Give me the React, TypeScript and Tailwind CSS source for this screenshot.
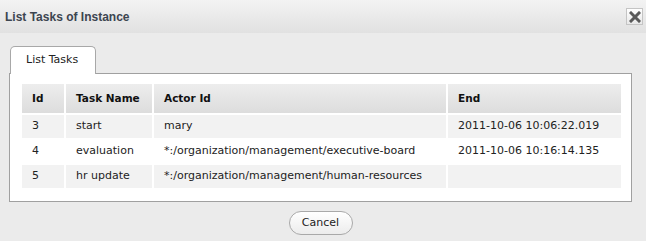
import React from 'react';

interface TaskRow {
  id: string;
  name: string;
  actor: string;
  end: string;
}

const rows: TaskRow[] = [
  { id: '3', name: 'start', actor: 'mary', end: '2011-10-06 10:06:22.019' },
  { id: '4', name: 'evaluation', actor: '*:/organization/management/executive-board', end: '2011-10-06 10:16:14.135' },
  { id: '5', name: 'hr update', actor: '*:/organization/management/human-resources', end: '' },
];

const CloseIcon: React.FC = () => (
  <svg width="12" height="12" viewBox="0 0 12 12">
    <path d="M2 2 L10 10 M10 2 L2 10" stroke="#5a5a5a" strokeWidth="3" strokeLinecap="square" />
  </svg>
);

const App: React.FC = () => {
  return (
    <div
      className="w-[646px] h-[241px] bg-[#ebebeb] flex flex-col overflow-hidden"
      style={{ fontFamily: '"DejaVu Sans", Verdana, sans-serif' }}
    >
      {/* title bar */}
      <div className="h-[33px] flex items-center justify-between pl-[5px] pr-[3px] bg-gradient-to-b from-[#f3f3f3] to-[#e1e1e1]">
        <span
          className="text-[12px] font-bold text-[#3c4550]"
          style={{ fontFamily: '"Liberation Sans Narrow", "Arial Narrow", "Liberation Sans", sans-serif' }}
        >
          List Tasks of Instance
        </span>
        <button className="w-[17px] h-[17px] flex items-center justify-center border border-[#c4c4c4] bg-gradient-to-b from-white to-[#e8e8e8]">
          <CloseIcon />
        </button>
      </div>

      <div className="pl-[9px] pr-[14px] pt-[13px] flex flex-col">
        {/* tab strip */}
        <div className="flex">
          <div className="ml-[1px] w-[86px] h-[28px] -mb-px relative z-10 bg-white border border-b-0 border-[#a8a8a8] rounded-t-[5px] flex items-center pl-[15px] text-[11px] text-[#222]">
            List Tasks
          </div>
        </div>

        {/* panel */}
        <div className="bg-white border border-[#a0a0a0] pt-[10px] pb-[11px] pl-[12px]">
          <table className="w-[599px] border-collapse table-fixed text-[11px] text-[#222]">
            <colgroup>
              <col className="w-[43px]" />
              <col className="w-[88px]" />
              <col className="w-[294px]" />
              <col className="w-[174px]" />
            </colgroup>
            <thead>
              <tr className="h-[30px] bg-gradient-to-b from-[#ededed] to-[#dcdcdc]">
                {['Id', 'Task Name', 'Actor Id', 'End'].map((h, i) => (
                  <th
                    key={h}
                    className={`text-left font-bold text-[10.5px] text-[#111] pl-[10px] border-b-2 border-white ${i < 3 ? 'border-r-2' : ''}`}
                  >
                    {h}
                  </th>
                ))}
              </tr>
            </thead>
            <tbody>
              {rows.map((r, idx) => (
                <tr key={r.id} className={`h-[25px] ${idx % 2 === 0 ? 'bg-[#f2f2f2]' : 'bg-white'}`}>
                  <td className="pl-[10px] border-r-2 border-b-2 border-white">{r.id}</td>
                  <td className="pl-[10px] border-r-2 border-b-2 border-white">{r.name}</td>
                  <td className="pl-[10px] border-r-2 border-b-2 border-white whitespace-nowrap">{r.actor}</td>
                  <td className="pl-[10px] border-b-2 border-white whitespace-nowrap">{r.end}</td>
                </tr>
              ))}
            </tbody>
          </table>
        </div>

        {/* footer */}
        <div className="flex justify-center pt-[9px]">
          <button className="w-[64px] h-[24px] rounded-full border border-[#a9a9a9] bg-gradient-to-b from-white to-[#ececec] text-[11px] text-[#222]">
            Cancel
          </button>
        </div>
      </div>
    </div>
  );
};

export default App;
